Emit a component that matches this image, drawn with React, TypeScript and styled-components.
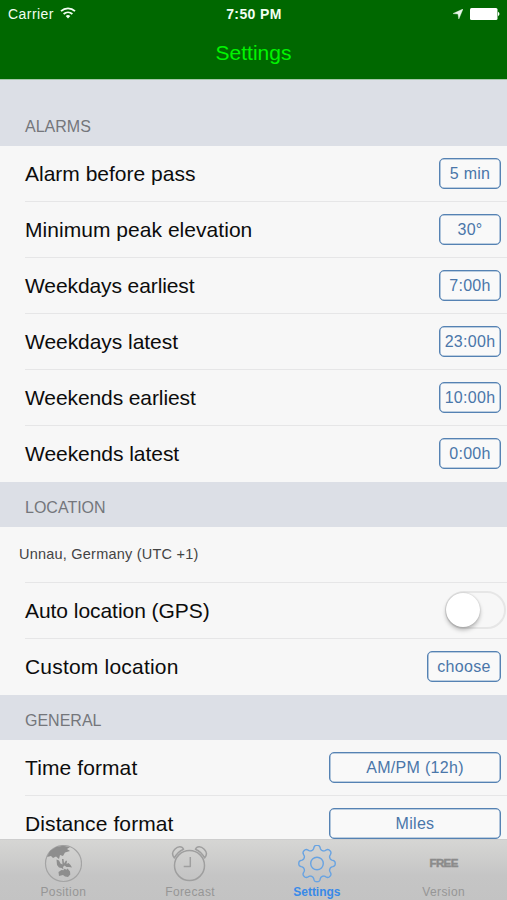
import React from "react";
import styled, { createGlobalStyle } from "styled-components";

const Global = createGlobalStyle`
  * { box-sizing: border-box; }
  html, body { margin: 0; padding: 0; }
  body { font-family: "Liberation Sans", Arial, sans-serif; background: #f7f7f7; overflow: hidden; }
`;

const Screen = styled.div`
  width: 507px;
  height: 900px;
  display: flex;
  flex-direction: column;
  overflow: hidden;
  background: #f7f7f7;
`;

const TopBar = styled.header`
  flex: none;
  height: 80px;
  background: #006800;
  border-bottom: 1px solid #a5c8a9;
  color: #f2fff2;
`;

const StatusBar = styled.div`
  height: 28px;
  padding: 0 7px 0 8px;
  display: grid;
  grid-template-columns: 1fr auto 1fr;
  align-items: center;
`;

const Carrier = styled.div`
  display: flex;
  align-items: center;
  gap: 6px;
  font-size: 14px;
  line-height: 28px;
  letter-spacing: 0.45px;
  svg { margin-top: -2px; }
`;

const Clock = styled.div`
  font-size: 14px;
  font-weight: bold;
  line-height: 28px;
  letter-spacing: 0.4px;
`;

const StatusIcons = styled.div`
  display: flex;
  justify-content: flex-end;
  align-items: center;
  gap: 7px;
  height: 26px;
`;

const Title = styled.h1`
  margin: 0;
  height: 51px;
  line-height: 50px;
  text-align: center;
  font-size: 21px;
  font-weight: normal;
  color: #00f500;
`;

const Content = styled.main`
  flex: 1;
  min-height: 0;
  overflow: hidden;
`;

const SectionHeader = styled.h2<{ $height: number }>`
  margin: 0;
  height: ${(p) => p.$height}px;
  padding: 0 25px 9px;
  display: flex;
  align-items: flex-end;
  background: #dcdfe6;
  color: #74767b;
  font-size: 16px;
  line-height: 20px;
  font-weight: normal;
`;

const Row = styled.div`
  height: 56.1px;
  margin-left: 25px;
  padding-right: 6px;
  display: flex;
  align-items: center;
  justify-content: space-between;
  border-bottom: 1px solid #e6e6e7;
  &:last-child { border-bottom-color: transparent; }
`;

const Label = styled.span<{ $spacing: number }>`
  padding-top: 1px;
  font-size: 21px;
  letter-spacing: ${(p) => p.$spacing}px;
  color: #0c0c0c;
  white-space: nowrap;
`;

const Place = styled.span`
  margin: -2px 0 0 -6px;
  font-size: 14.5px;
  letter-spacing: 0.22px;
  color: #444;
`;

const ValueButton = styled.button<{ $width: number }>`
  width: ${(p) => p.$width}px;
  height: 31px;
  padding: 1px 0 0;
  border: 1px solid #5582b3;
  border-radius: 5px;
  box-shadow: inset 0 0 0 0.6px #7fa1c6;
  background: #f9f9f9;
  color: #4a76a9;
  font-family: inherit;
  font-size: 16px;
  letter-spacing: 0.3px;
  white-space: nowrap;
`;

const Switch = styled.button`
  flex: none;
  width: 61px;
  height: 38px;
  margin: -2px -5px 0 0;
  padding: 0;
  border: 2px solid #e6e6e6;
  border-radius: 19px;
  background: #f7f7f7;
`;

const Knob = styled.span`
  display: block;
  width: 34px;
  height: 34px;
  margin-left: -1px;
  border-radius: 50%;
  background: #fff;
  box-shadow: 0 3px 4px rgba(0, 0, 0, 0.25), 0 0 2px rgba(0, 0, 0, 0.2);
`;

const TabBar = styled.nav`
  flex: none;
  height: 61px;
  display: grid;
  grid-template-columns: repeat(4, 1fr);
  border-top: 1px solid #cecece;
  background: linear-gradient(#d6d6d4, #c5c5c5 60%, #c3c3c3);
`;

const Tab = styled.div<{ $active?: boolean }>`
  display: flex;
  flex-direction: column;
  align-items: center;
  padding-top: 2px;
  color: ${(p) => (p.$active ? "#398ae8" : "#969696")};
  font-size: 12px;
  font-weight: ${(p) => (p.$active ? "bold" : "normal")};
  line-height: 15px;
  letter-spacing: ${(p) => (p.$active ? 0 : 0.4)}px;
  svg { display: block; }
`;

const IconBox = styled.div`
  height: 43px;
  display: flex;
  align-items: center;
  justify-content: center;
`;

const Free = styled.span`
  font-size: 11.5px;
  font-weight: bold;
  color: #8b8b8b;
  letter-spacing: -0.6px;
  -webkit-text-stroke: 0.5px #8b8b8b;
`;

const WifiIcon = () => (
  <svg width="16" height="12" viewBox="0 0 16 12" fill="none" stroke="#f2fff2" strokeWidth="1.8">
    <path d="M1 4.2C5 .3 11 .3 15 4.2M3.6 7C6.2 4.7 9.8 4.7 12.4 7" />
    <path d="M5.7 9Q8 7.1 10.3 9L8 11.5Z" fill="#f2fff2" stroke="none" />
  </svg>
);

const ArrowIcon = () => (
  <svg width="10" height="10" viewBox="0 0 10 10">
    <path d="M10 0 5.8 10 5 5 0 4.6Z" fill="#e9f7e9" stroke="#e9f7e9" strokeWidth="0.4" />
  </svg>
);

const BatteryIcon = () => (
  <svg width="30" height="12" viewBox="0 0 30 12" fill="#fff">
    <rect width="27.5" height="12" rx="1.5" /><path d="M28 3.8Q31 6 28 8.2Z" />
  </svg>
);

const GlobeIcon = () => (
  <svg width="38" height="38" viewBox="0 0 38 38">
    <circle cx="19.5" cy="18.5" r="18" fill="none" stroke="#a4a4a4" strokeWidth="1.2" />
    <path
      fill="#8e8e8e"
      d="M3 12 6 6 12 2 19 .8 26 2 23 4 26 6 21 7.5 19 11 16 10 15 14 12 11.5 9 13 7 11ZM12.5 14.5l2.5 1 1.5 3 2 1-.5-5.5 1.5 0 .5 4.5 2-3 1 .5-.5 3 2-1 2 2 1.5 2.5-3-.5-2.5 0-2-1.5-1.5 1.5.5 2.5-2-1.5-2.5-.5-2-2.5ZM14.5 27l3-2 2 .3 1-1.5 2 1 1-1.3 2.5 3 .3 3-2.3 2.5-3-.5-2-1.5-4 1Z"
    />
  </svg>
);

const AlarmIcon = () => (
  <svg width="38" height="38" viewBox="0 0 38 38" fill="none" stroke="#9f9f9f" strokeWidth="1.5" strokeLinejoin="round">
    <circle cx="18.5" cy="20.5" r="15" />
    <path d="M19.3 12v9.5h-6.6" />
    <path d="M3.4 13Q-.5 8.5 3.8 4.2C7 1 11 .6 12.6 4.2Q6.5 6.8 3.4 13ZM33.6 13Q37.5 8.5 33.2 4.2C30 1 26 .6 24.4 4.2Q30.5 6.8 33.6 13Z" />
  </svg>
);

const gearOutline = Array.from({ length: 192 }, (_, i) => {
  const angle = (i / 192) * Math.PI * 2;
  const radius = 16.1 + 2.1 * Math.tanh(1.6 * Math.cos(8 * angle)) / Math.tanh(1.6);
  return `${(19 + radius * Math.sin(angle)).toFixed(2)} ${(18.5 - radius * Math.cos(angle)).toFixed(2)}`;
}).join("L");

const GearIcon = () => (
  <svg width="38" height="38" viewBox="0 0 38 38" fill="none" stroke="#68a3e2" strokeWidth="1.4" strokeLinejoin="round">
    <circle cx="19" cy="18.5" r="6.3" />
    <path d={`M${gearOutline}Z`} />
  </svg>
);

type Setting = { label: string; value: string; width: number; spacing: number };

const alarms: Setting[] = [
  { label: "Alarm before pass", value: "5 min", width: 62, spacing: 0 },
  { label: "Minimum peak elevation", value: "30°", width: 62, spacing: 0.04 },
  { label: "Weekdays earliest", value: "7:00h", width: 62, spacing: -0.1 },
  { label: "Weekdays latest", value: "23:00h", width: 62, spacing: -0.05 },
  { label: "Weekends earliest", value: "10:00h", width: 62, spacing: -0.1 },
  { label: "Weekends latest", value: "0:00h", width: 62, spacing: -0.05 },
];

const general: Setting[] = [
  { label: "Time format", value: "AM/PM (12h)", width: 172, spacing: 0.1 },
  { label: "Distance format", value: "Miles", width: 172, spacing: 0.1 },
];

const SettingRow = ({ label, value, width, spacing }: Setting) => (
  <Row>
    <Label $spacing={spacing}>{label}</Label>
    <ValueButton $width={width}>{value}</ValueButton>
  </Row>
);

export default function App() {
  return (
    <Screen>
      <Global />
      <TopBar>
        <StatusBar>
          <Carrier>Carrier <WifiIcon /></Carrier>
          <Clock>7:50 PM</Clock>
          <StatusIcons><ArrowIcon /><BatteryIcon /></StatusIcons>
        </StatusBar>
        <Title>Settings</Title>
      </TopBar>
      <Content>
        <section>
          <SectionHeader $height={65.5}>ALARMS</SectionHeader>
          {alarms.map((s) => <SettingRow key={s.label} {...s} />)}
        </section>
        <section>
          <SectionHeader $height={45}>LOCATION</SectionHeader>
          <Row><Place>Unnau, Germany (UTC +1)</Place></Row>
          <Row>
            <Label $spacing={-0.05}>Auto location (GPS)</Label>
            <Switch aria-label="Auto location"><Knob /></Switch>
          </Row>
          <SettingRow label="Custom location" value="choose" width={74} spacing={0.2} />
        </section>
        <section>
          <SectionHeader $height={45}>GENERAL</SectionHeader>
          {general.map((s) => <SettingRow key={s.label} {...s} />)}
        </section>
      </Content>
      <TabBar>
        <Tab><IconBox><GlobeIcon /></IconBox>Position</Tab>
        <Tab><IconBox><AlarmIcon /></IconBox>Forecast</Tab>
        <Tab $active><IconBox><GearIcon /></IconBox>Settings</Tab>
        <Tab><IconBox><Free>FREE</Free></IconBox>Version</Tab>
      </TabBar>
    </Screen>
  );
}
